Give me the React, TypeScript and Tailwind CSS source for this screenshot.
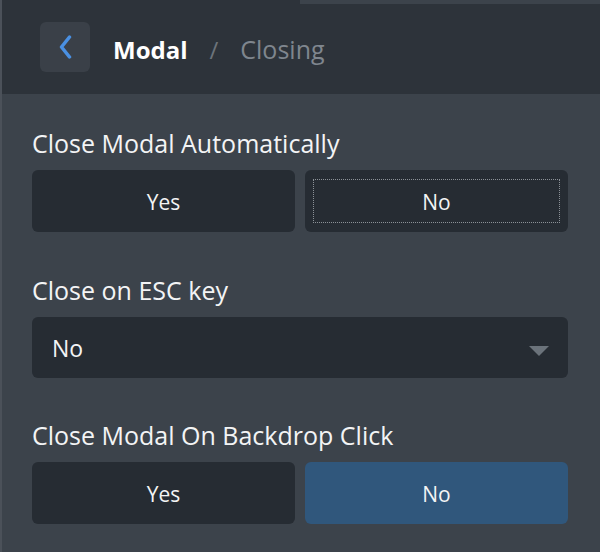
import React from "react";

const font = { fontFamily: '"Open Sans", "Noto Sans", sans-serif' };

function Chevron() {
  return (
    <svg width="18" height="24" viewBox="0 0 18 24" fill="none">
      <path d="M13.5 2 L5.5 12 L13.5 22" stroke="#4a90e2" strokeWidth="3.5" strokeLinecap="round" strokeLinejoin="round" />
    </svg>
  );
}

function Toggle({ active, focused }: { active: "yes" | "no" | "none"; focused?: boolean }) {
  return (
    <div className="grid grid-cols-2 gap-[10px]">
      <button className={`h-[62px] rounded-md pt-[3px] text-[21px] text-[#f3f4f5] ${active === "yes" ? "bg-[#30577c]" : "bg-[#262c33]"}`}>Yes</button>
      <button className={`h-[62px] rounded-md text-[21px] text-[#f3f4f5] px-[8px] py-[9px] ${active === "no" ? "bg-[#30577c]" : "bg-[#262c33]"}`}>
        <span className={`flex h-full w-full items-center justify-center pt-[3px] ${focused ? "border border-dotted border-[#8b9197]" : ""}`}>No</span>
      </button>
    </div>
  );
}

export default function App() {
  return (
    <div className="w-[600px] h-[552px] bg-[#3c434b] border-l-2 border-[#4b5159] overflow-hidden" style={font}>
      <div className="relative h-[94px] bg-[#2d333a] flex items-center pl-[38px]">
        <div className="absolute top-0 right-0 w-[300px] h-[4px] bg-[#3c434b]" />
        <div className="w-[50px] h-[50px] rounded-md bg-[#3a4048] flex items-center justify-center">
          <Chevron />
        </div>
        <span className="ml-[23px] mt-[5px] text-[24px] font-bold text-white">Modal</span>
        <span className="ml-[22px] mt-[5px] text-[24px] text-[#6c737a]">/</span>
        <span className="ml-[22px] mt-[5px] text-[25px] text-[#7f868e]">Closing</span>
      </div>
      <div className="pt-[34px] pl-[30px] pr-[32px] flex flex-col">
        <div className="text-[25px] leading-[30px] text-[#f3f4f5] mb-[12px]">Close Modal Automatically</div>
        <Toggle active="none" focused />
        <div className="mt-[43px] text-[25px] leading-[30px] text-[#f3f4f5] mb-[12px]">Close on ESC key</div>
        <div className="h-[61px] rounded-md bg-[#262c33] flex items-center justify-between pl-[20px] pr-[19px]">
          <span className="text-[23px] pt-[2px] text-[#f3f4f5]">No</span>
          <svg className="mt-[6px]" width="20" height="10" viewBox="0 0 20 10"><path d="M0 0 H20 L10 10 Z" fill="#6b737b" /></svg>
        </div>
        <div className="mt-[42px] text-[25px] leading-[30px] text-[#f3f4f5] mb-[12px]">Close Modal On Backdrop Click</div>
        <Toggle active="no" />
      </div>
    </div>
  );
}
